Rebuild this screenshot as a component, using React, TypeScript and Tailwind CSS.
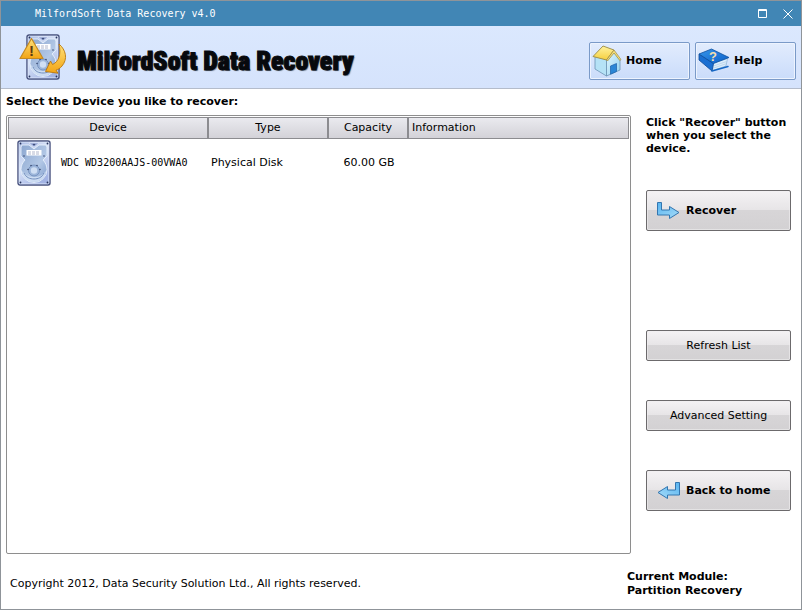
import type { ReactNode } from "react";

const COLUMNS = [
  { label: "Device", className: "w-[201px] text-center border-l" },
  { label: "Type", className: "w-[120px] text-center" },
  { label: "Capacity", className: "w-[80px] text-center" },
  { label: "Information", className: "pl-[3px] text-left" },
];

const DEVICES = [
  { name: "WDC WD3200AAJS-00VWA0", type: "Physical Disk", capacity: "60.00 GB", info: "" },
];

// Body of a hard disk, drawn in a 34x46 box
function DiskShape() {
  return (
    <>
      <defs>
        <linearGradient id="disk-body" x1="0" y1="0" x2="0.6" y2="1">
          <stop offset="0" stopColor="#a9bbe4" />
          <stop offset="0.5" stopColor="#d9e3f8" />
          <stop offset="1" stopColor="#a3b4e4" />
        </linearGradient>
        <linearGradient id="disk-plate" x1="0" y1="0" x2="1" y2="1">
          <stop offset="0" stopColor="#8ba6cf" />
          <stop offset="0.6" stopColor="#b3c8e6" />
          <stop offset="1" stopColor="#7f9ccb" />
        </linearGradient>
      </defs>
      <rect x="1" y="1" width="32" height="44" rx="2" fill="url(#disk-body)" stroke="#46507c" strokeWidth="1.4" />
      <rect x="2.2" y="2.2" width="29.6" height="41.6" rx="1" fill="none" stroke="#e0e8fa" strokeWidth="0.7" />
      <path
        d="M5 5h7l5 4 5-4h7l1 2v9l-4 4c2.500 2.500 4 6 4 9.500a13 13 0 0 1-26 0C4 26 5.500 22.500 8 20l-4-4V7z"
        fill="url(#disk-plate)"
        stroke="#e8f0fc"
        strokeWidth="0.9"
      />
      <path d="M12 3h10l-5 4z" fill="#8496c8" stroke="#dfe7fa" strokeWidth="0.7" />
      <path d="M5 31c0 7 6 11 12 11s12-4 12-11c-3 4-7 6-12 6s-9-2-12-6z" fill="#d3e2f6" opacity="0.85" />
      <path d="M7 33c2 4.500 6 6 10 6s8-1.500 10-6" fill="none" stroke="#6b88b8" strokeWidth="0.9" />
      <circle cx="17" cy="30.500" r="5.500" fill="#9db6da" stroke="#6784b4" strokeWidth="0.7" />
      <circle cx="17" cy="30.500" r="3.200" fill="#cfdef3" />
      <rect x="9.500" y="10" width="15" height="5.500" fill="#fff" />
      <path d="M11 12h12M11 14h12" stroke="#8f9ab8" strokeWidth="0.7" strokeDasharray="3 1" />
      <g fill="#27345c">
        <circle cx="3.500" cy="3.500" r="0.9" />
        <circle cx="30.500" cy="3.500" r="0.9" />
        <circle cx="3.500" cy="42.500" r="0.9" />
        <circle cx="30.500" cy="42.500" r="0.9" />
        <circle cx="17" cy="4.500" r="0.8" />
        <circle cx="7" cy="16" r="0.7" />
        <circle cx="27" cy="16" r="0.7" />
        <circle cx="14" cy="25.500" r="0.7" />
        <circle cx="20" cy="25.500" r="0.7" />
        <circle cx="11" cy="29.500" r="0.7" />
        <circle cx="23" cy="29.500" r="0.7" />
      </g>
    </>
  );
}

function DiskIcon() {
  return (
    <svg width="34" height="46" viewBox="0 0 34 46" className="shrink-0" aria-hidden="true">
      <DiskShape />
    </svg>
  );
}

function LogoIcon() {
  return (
    <svg width="48" height="46" viewBox="0 0 48 46" className="shrink-0" aria-hidden="true">
      <defs>
        <linearGradient id="logo-gold" x1="0" y1="0" x2="0" y2="1">
          <stop offset="0" stopColor="#ffe27a" />
          <stop offset="1" stopColor="#f2a414" />
        </linearGradient>
      </defs>
      <g transform="translate(7 0)">
        <DiskShape />
      </g>
      <path
        d="M40 10c7 6 9 15 3 22-2 2.500-4 3.500-6 4.200l2 3-12.500-1.700 5-10.500 2 3.500c6-2.500 9-10 6.500-20.500z"
        fill="url(#logo-gold)"
        stroke="#b9770c"
        strokeWidth="0.9"
        strokeLinejoin="round"
      />
      <path
        d="M12.500 4.500 24 24.500H1z"
        fill="url(#logo-gold)"
        stroke="#c58a22"
        strokeWidth="1.200"
        strokeLinejoin="round"
      />
      <text x="12.500" y="22" textAnchor="middle" fontSize="15" fontWeight="bold" fill="#5c3a12" fontFamily="Liberation Sans, sans-serif">
        !
      </text>
    </svg>
  );
}

function HouseIcon() {
  return (
    <svg width="30" height="32" viewBox="0 0 30 32" className="shrink-0" aria-hidden="true">
      <defs>
        <linearGradient id="house-wall" x1="0" y1="0" x2="1" y2="1">
          <stop offset="0" stopColor="#e4f7fe" />
          <stop offset="1" stopColor="#8fd0f0" />
        </linearGradient>
        <linearGradient id="house-roof" x1="0" y1="0" x2="0" y2="1">
          <stop offset="0" stopColor="#fff3a0" />
          <stop offset="1" stopColor="#f5cf3d" />
        </linearGradient>
      </defs>
      <path d="M3 11v13l11.500 7V14z" fill="#b5e2f6" stroke="#6b93b4" strokeWidth="0.8" />
      <path d="M14.500 15 22 7l6 8v10l-13.500 6z" fill="url(#house-wall)" stroke="#6b93b4" strokeWidth="0.8" />
      <path d="m18.500 21 6-2.500v8l-6 2.700z" fill="#2a86d6" stroke="#1a5fa8" strokeWidth="0.7" />
      <path d="M11 1 22 5l-7.500 10L1 11.500z" fill="url(#house-roof)" stroke="#9a8a45" strokeWidth="0.9" strokeLinejoin="round" />
      <path d="m22 5 7 9.500-1.200 1L22 8l-6.500 8-1-1z" fill="#f7df76" stroke="#9a8a45" strokeWidth="0.7" strokeLinejoin="round" />
    </svg>
  );
}

function BookIcon() {
  return (
    <svg width="32" height="25" viewBox="0 0 32 25" className="shrink-0" aria-hidden="true">
      <defs>
        <linearGradient id="book-cover" x1="0" y1="0" x2="1" y2="1">
          <stop offset="0" stopColor="#3796ea" />
          <stop offset="1" stopColor="#0b5fc8" />
        </linearGradient>
      </defs>
      <path d="m15.500 15 14-4.500-1.500 7.500-13.500 4.500z" fill="#dcedfb" stroke="#7ba7d0" strokeWidth="0.6" />
      <path d="m15.500 18 13-4.500M15.200 20.200l13-4.500" stroke="#a8c6e2" strokeWidth="0.6" />
      <path d="M1 6v6l13 11 1.500-7.500z" fill="#1a6fd2" stroke="#0c4a98" strokeWidth="0.8" strokeLinejoin="round" />
      <path d="m14 23 16-4.500" stroke="#1667c4" strokeWidth="1.500" strokeLinecap="round" />
      <path d="M1 6 13.500 1 31 9.500 15.500 15.500z" fill="url(#book-cover)" stroke="#0c4f9e" strokeWidth="0.8" strokeLinejoin="round" />
      <text x="15" y="13" textAnchor="middle" fontSize="13" fontWeight="bold" fill="#f5dfae" fontFamily="Liberation Sans, sans-serif">
        ?
      </text>
    </svg>
  );
}

function ArrowIcon({ back }: { back?: boolean }) {
  return (
    <svg width="23" height="18" viewBox="0 0 23 18" className={`shrink-0 ${back ? "-scale-x-100" : ""}`} aria-hidden="true">
      <defs>
        <linearGradient id="arrow-fill" x1="0" y1="0" x2="1" y2="1">
          <stop offset="0" stopColor="#58b4f0" />
          <stop offset="1" stopColor="#a6dcf8" />
        </linearGradient>
      </defs>
      <path
        d="M.5.5h4V8h8V4.500l9.500 6-9.500 6V13H.5z"
        fill="url(#arrow-fill)"
        stroke="#3376b0"
        strokeLinejoin="round"
      />
    </svg>
  );
}

function HeaderButton({ children }: { children: ReactNode }) {
  return (
    <button
      type="button"
      className="flex h-[38px] w-[101px] items-center gap-1 rounded-xs border border-[#7a9ac8] bg-linear-to-b from-[#e2ecfd] via-[#d6e4fc] to-[#cadcfa] pl-0.5 text-[11px] font-bold inset-ring inset-ring-[#edf3fe]"
    >
      {children}
    </button>
  );
}

function PanelButton({ className, children }: { className: string; children: ReactNode }) {
  return (
    <button
      type="button"
      className={`flex w-full shrink-0 items-center rounded-xs border border-[#6c6a6c] bg-[linear-gradient(#f4f2f4,#e7e5e7_48%,#d7d5d7_50%,#d3d1d3)] inset-ring inset-ring-[#f0eef0]/60 ${className}`}
    >
      {children}
    </button>
  );
}

function TitleBar() {
  return (
    <div className="flex h-[25px] items-center justify-between bg-[#4186b5] pr-2 pl-[34px] text-white">
      <span className="font-['DejaVu_Sans_Mono',monospace] text-[10px]">MilfordSoft Data Recovery v4.0</span>
      <div className="flex items-center gap-4">
        <button type="button" aria-label="Maximize">
          <svg width="9" height="9" viewBox="0 0 9 9" aria-hidden="true">
            <path d="M.5.5h8v8h-8zM0 1.500h9" fill="none" stroke="currentColor" />
          </svg>
        </button>
        <button type="button" aria-label="Close">
          <svg width="10" height="10" viewBox="0 0 10 10" aria-hidden="true">
            <path d="m.5.5 9 9m0-9-9 9" stroke="currentColor" />
          </svg>
        </button>
      </div>
    </div>
  );
}

function DeviceTable() {
  return (
    <div className="min-w-0 flex-1 rounded-xs border border-[#8e8e8e] p-px">
      <table className="w-full table-fixed border-separate border-spacing-0">
        <thead>
          <tr>
            {COLUMNS.map((col) => (
              <th
                key={col.label}
                className={`h-[22px] border-y border-r-2 border-[#8c8c90] bg-linear-to-b from-[#eaeaef] to-[#d3d2d8] p-0 pb-px font-normal last:border-r ${col.className}`}
              >
                {col.label}
              </th>
            ))}
          </tr>
        </thead>
        <tbody>
          {DEVICES.map((device) => (
            <tr key={device.name}>
              <td className="p-0 pt-px pl-[9px]">
                <div className="flex items-center gap-2.5">
                  <DiskIcon />
                  <span className="font-['DejaVu_Sans_Mono',monospace] text-[10px] whitespace-nowrap">{device.name}</span>
                </div>
              </td>
              <td className="p-0 pl-0.5">{device.type}</td>
              <td className="p-0 text-center">{device.capacity}</td>
              <td className="p-0">{device.info}</td>
            </tr>
          ))}
        </tbody>
      </table>
    </div>
  );
}

export default function App() {
  return (
    <div className="flex min-h-screen flex-col border border-[#8f9499] bg-white font-['DejaVu_Sans',sans-serif] text-[11px] leading-[14px] text-black">
      <TitleBar />
      <header className="flex h-[63px] items-center justify-between border-b border-[#b4bccb] bg-linear-to-b from-[#dbe8fe] to-[#d5e3fc] pr-[5px] pl-[18px]">
        <div className="flex items-center gap-2.5">
          <LogoIcon />
          <h1 className="pt-2 font-['Roboto_Condensed','DejaVu_Sans_Condensed',sans-serif] text-[26px] leading-8 font-black whitespace-nowrap text-[#07090d] [text-shadow:1px_1px_1px_#6b7686] [-webkit-text-stroke:1px_#07090d]">
            MilfordSoft Data Recovery
          </h1>
        </div>
        <nav className="flex gap-[5px] pt-[7px]">
          <HeaderButton>
            <HouseIcon />
            Home
          </HeaderButton>
          <HeaderButton>
            <BookIcon />
            Help
          </HeaderButton>
        </nav>
      </header>

      <h2 className="p-1.5 pl-[5px] font-bold">Select the Device you like to recover:</h2>

      <main className="flex flex-1 gap-[15px] pr-2.5 pl-[5px]">
        <DeviceTable />
        <aside className="w-[145px] shrink-0 pt-px">
          <p className="mb-[35px] leading-[13px] font-bold">Click "Recover" button when you select the device.</p>
          <PanelButton className="h-[41px] gap-1.5 pl-2.5 font-bold">
            <ArrowIcon />
            Recover
          </PanelButton>
          <div className="mt-[99px] flex flex-col gap-[39px]">
            <PanelButton className="h-[31px] justify-center">Refresh List</PanelButton>
            <PanelButton className="h-[31px] justify-center">Advanced Setting</PanelButton>
            <PanelButton className="h-[41px] gap-1.5 pl-2.5 font-bold">
              <ArrowIcon back />
              Back to home
            </PanelButton>
          </div>
        </aside>
      </main>

      <footer className="flex h-[55px] items-center justify-between pt-1 pl-[9px]">
        <p>Copyright 2012, Data Security Solution Ltd., All rights reserved.</p>
        <p className="w-[174px] font-bold">
          Current Module:
          <br />
          Partition Recovery
        </p>
      </footer>
    </div>
  );
}
